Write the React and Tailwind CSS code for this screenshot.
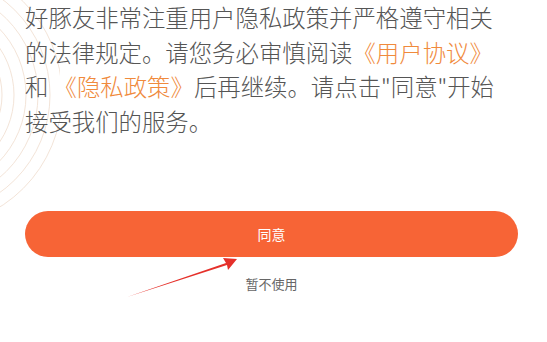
import React from 'react';

const Rings = () => (
  <svg className="absolute left-0 top-0" width="60" height="220" viewBox="0 0 60 220">
    {[60, 72, 84, 96, 108, 120, 132].map((r) => (
      <circle key={r} cx="-70" cy="95" r={r} fill="none" stroke="#f3e4d8" strokeWidth="1" />
    ))}
  </svg>
);

const Arrow = () => (
  <svg className="absolute left-0 top-0 pointer-events-none" width="547" height="342">
    <path d="M127 297 L226 263 L223 258 L237 259 L228 270 L227 265 Z" fill="#e5302a" />
  </svg>
);

const link = 'text-[#f08a3c]';

export default function App() {
  return (
    <div
      className="relative w-[547px] h-[342px] bg-white overflow-hidden"
      style={{ fontFamily: '"Noto Sans CJK SC", "Noto Sans", sans-serif' }}
    >
      <Rings />
      <div className="relative pl-[25px] pr-[29px] text-[23.4px] leading-[34.6px] text-[#555555] font-light whitespace-nowrap">
        <div>好豚友非常注重用户隐私政策并严格遵守相关</div>
        <div>
          的法律规定。请您务必审慎阅读<span className={link}>《用户协议》</span>
        </div>
        <div>
          和 <span className={link}>《隐私政策》</span>后再继续。请点击"同意"开始
        </div>
        <div>接受我们的服务。</div>
      </div>
      <div className="relative pl-[25px] pr-[29px] mt-[73px]">
        <button className="w-full h-[46px] rounded-full bg-[#f76436] text-white text-[14px]">
          同意
        </button>
        <div className="text-center text-[13px] text-[#666666] mt-[17px]">暂不使用</div>
      </div>
      <Arrow />
    </div>
  );
}
